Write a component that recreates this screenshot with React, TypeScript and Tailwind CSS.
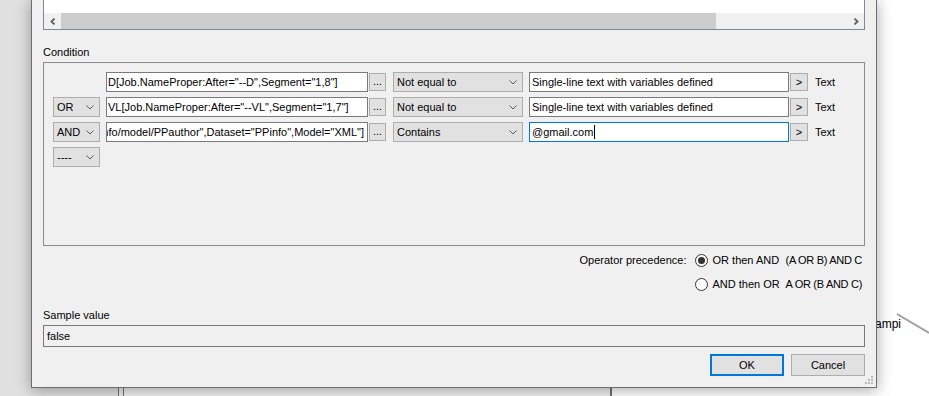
import React from "react";

const Chevron = () => (
	<svg width="8" height="5" viewBox="0 0 8 5" className="shrink-0">
		<path d="M0.5 0.5 L4 4 L7.5 0.5" fill="none" stroke="#5a5a5a" strokeWidth="1" />
	</svg>
);

function Dropdown({ value, className }: { value: string; className: string }) {
	return (
		<div
			className={`flex h-[20px] shrink-0 items-center justify-between border border-[#adadad] bg-[#e1e1e1] pl-[3px] pr-[5px] ${className}`}
		>
			<span className="whitespace-nowrap">{value}</span>
			<Chevron />
		</div>
	);
}

function SmallButton({ label, className = "" }: { label: string; className?: string }) {
	return (
		<div
			className={`flex h-[18px] shrink-0 items-center justify-center border border-[#adadad] bg-[#e1e1e1] leading-none ${className}`}
		>
			{label}
		</div>
	);
}

type Row = { op?: string; field: string; compare: string; value: string; focused?: boolean; scrolled?: boolean };

const rows: Row[] = [
	{ field: 'D[Job.NameProper:After="--D",Segment="1,8"]', compare: "Not equal to", value: "Single-line text with variables defined" },
	{ op: "OR", field: 'VL[Job.NameProper:After="--VL",Segment="1,7"]', compare: "Not equal to", value: "Single-line text with variables defined" },
	{
		op: "AND",
		field: 'info/model/PPauthor",Dataset="PPinfo",Model="XML"]',
		compare: "Contains",
		value: "@gmail.com",
		focused: true,
		scrolled: true,
	},
];

function ConditionRow({ row }: { row: Row }) {
	return (
		<div className="flex h-[20px] items-center">
			{row.op ? <Dropdown value={row.op} className="w-[47px]" /> : <div className="w-[47px] shrink-0" />}
			<div
				className={`ml-[6px] flex h-[20px] w-[262px] shrink-0 items-center overflow-hidden border border-[#7a7a7a] bg-white ${
					row.scrolled ? "justify-end pr-[3px]" : "pl-[1px]"
				}`}
			>
				<span className="shrink-0 whitespace-nowrap">{row.field}</span>
			</div>
			<SmallButton label="..." className="ml-[1px] w-[17px] items-end pb-[3px]" />
			<Dropdown value={row.compare} className="ml-[7px] w-[130px]" />
			<div
				className={`ml-[6px] flex h-[20px] w-[260px] shrink-0 items-center overflow-hidden border bg-white pl-[2px] ${
					row.focused ? "border-[#0078d7]" : "border-[#7a7a7a]"
				}`}
			>
				<span className="whitespace-nowrap">{row.value}</span>
				{row.focused && <span className="ml-[1px] h-[14px] w-[1px] bg-black" />}
			</div>
			<SmallButton label=">" className="ml-[1px] w-[18px]" />
			<span className="ml-[7px]">Text</span>
		</div>
	);
}

function Radio({ checked }: { checked?: boolean }) {
	return (
		<span className="flex h-[13px] w-[13px] shrink-0 items-center justify-center rounded-full border border-[#333] bg-white">
			{checked && <span className="h-[7px] w-[7px] rounded-full bg-[#333]" />}
		</span>
	);
}

const ScrollArrow = ({ dir }: { dir: "left" | "right" }) => (
	<div className="flex w-[17px] items-center justify-center">
		<svg width="6" height="7" viewBox="0 0 6 7">
			<path
				d={dir === "left" ? "M4.5 0.5 L1.5 3.5 L4.5 6.5" : "M1.5 0.5 L4.5 3.5 L1.5 6.5"}
				fill="none"
				stroke="#606060"
				strokeWidth="1.8"
			/>
		</svg>
	</div>
);

export default function App() {
	return (
		<div className="relative flex h-[396px] w-[929px] overflow-hidden bg-white font-['Liberation_Sans',Arial,sans-serif] text-[11px] leading-[16px] text-black">
			{/* window underneath */}
			<div className="w-[118px] bg-[#e0e0e0]" />
			<div className="w-[1px] bg-[#707070]" />
			<div className="w-[4px] bg-[#ececec]" />
			<div className="w-[1px] bg-[#707070]" />
			<div className="w-[486px] bg-[#f0f0f0]" />
			<div className="w-[2px] bg-[#707070]" />
			<div className="flex-1 bg-white" />

			<span className="absolute left-[875px] top-[316px] text-[12px]">ampi</span>
			<svg className="absolute left-[896px] top-[313px]" width="33" height="22" viewBox="0 0 33 22">
				<line x1="1" y1="1" x2="33" y2="20" stroke="#a0a0a0" strokeWidth="2" />
			</svg>

			{/* dialog */}
			<div className="absolute left-[31px] top-0 flex h-[388px] w-[846px] flex-col border-x border-b border-[#6e6e6e] bg-[#f0f0f0] px-[11px] shadow-[0_2px_14px_rgba(0,0,0,0.35)]">
				<div className="flex h-[30px] flex-col border-x border-b border-[#828790]">
					<div className="h-[13px] bg-white" />
					<div className="flex h-[16px] bg-[#f0f0f0]">
						<ScrollArrow dir="left" />
						<div className="w-[655px] bg-[#cdcdcd]" />
						<div className="flex-1" />
						<ScrollArrow dir="right" />
					</div>
				</div>

				<div className="mt-[14px] h-[16px]">Condition</div>
				<div className="mt-[2px] flex h-[184px] flex-col gap-[5px] border border-[#8c8c8c] pl-[9px] pt-[9px]">
					{rows.map((r, i) => (
						<ConditionRow key={i} row={r} />
					))}
					<Dropdown value="----" className="w-[47px]" />
				</div>

				<div className="mt-[6px] flex justify-end pr-[3px] whitespace-nowrap">
					<span className="mr-[8px] h-[16px]">Operator precedence:</span>
					<div className="flex flex-col gap-[8px]">
						<div className="flex h-[16px] items-center">
							<Radio checked />
							<span className="ml-[5px] w-[73px]">OR then AND</span>
							<span className="tracking-[-0.3px]">(A OR B) AND C</span>
						</div>
						<div className="flex h-[16px] items-center">
							<Radio />
							<span className="ml-[5px] w-[73px]">AND then OR</span>
							<span className="tracking-[-0.3px]">A OR (B AND C)</span>
						</div>
					</div>
				</div>

				<div className="mt-[15px] h-[16px]">Sample value</div>
				<div className="mt-[2px] flex h-[22px] items-center border border-[#7a7a7a] pl-[3px]">false</div>

				<div className="mt-[7px] flex justify-end gap-[7px]">
					<div className="flex h-[22px] w-[74px] items-center justify-center border-2 border-[#0078d7] bg-[#e1e1e1]">OK</div>
					<div className="flex h-[22px] w-[74px] items-center justify-center border border-[#adadad] bg-[#e1e1e1]">Cancel</div>
				</div>

				<svg className="absolute bottom-[2px] right-[2px]" width="9" height="9" viewBox="0 0 9 9">
					<rect x="6" y="0" width="2" height="2" fill="#b8b8b8" />
					<rect x="3" y="3" width="2" height="2" fill="#b8b8b8" />
					<rect x="6" y="3" width="2" height="2" fill="#b8b8b8" />
					<rect x="0" y="6" width="2" height="2" fill="#b8b8b8" />
					<rect x="3" y="6" width="2" height="2" fill="#b8b8b8" />
					<rect x="6" y="6" width="2" height="2" fill="#b8b8b8" />
				</svg>
			</div>
		</div>
	);
}
